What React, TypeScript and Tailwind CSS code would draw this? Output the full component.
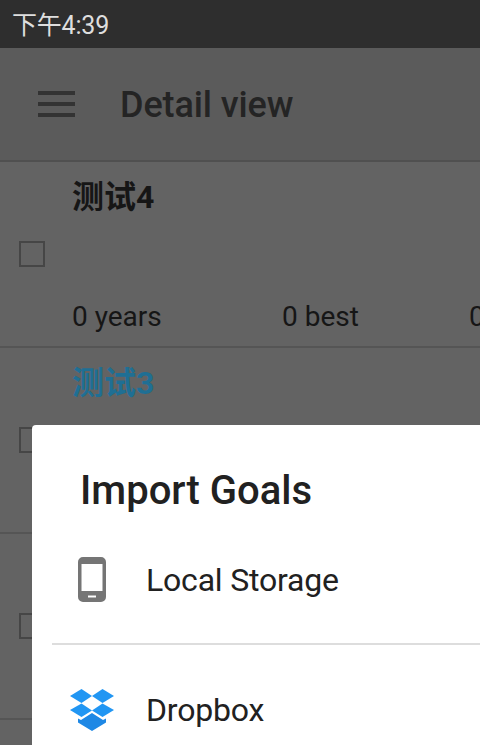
import React from "react";

const font = { fontFamily: 'Roboto, "Noto Sans CJK SC", sans-serif' };

// One goal row in the dimmed list behind the dialog
const GoalRow: React.FC<{ title: string; titleClass: string }> = ({ title, titleClass }) => (
  <div className="h-[186px] shrink-0 border-b-2 border-[#555555] flex">
    <div className="w-[72px] shrink-0 flex items-center pl-[19px]">
      <div className="w-[26px] h-[26px] border-2 border-[#464646]" />
    </div>
    <div className="flex-1 flex flex-col justify-between pt-[17px] pb-[11px] min-w-0">
      <div className={`text-[32px] leading-[36px] font-bold ${titleClass}`}>{title}</div>
      <div className="flex text-[28px] leading-[36px] text-[#161616] whitespace-nowrap">
        <span className="w-[210px] shrink-0">0 years</span>
        <span className="w-[187px] shrink-0">0 best</span>
        <span className="shrink-0">0</span>
      </div>
    </div>
  </div>
);

const PhoneIcon = () => (
  <svg width="28" height="45" viewBox="0 0 28 45">
    <path
      fillRule="evenodd"
      fill="#757575"
      d="M5 0h18a5 5 0 0 1 5 5v35a5 5 0 0 1-5 5H5a5 5 0 0 1-5-5V5a5 5 0 0 1 5-5zM3.500 7v27h21V7zM10 38.500v2h8v-2z"
    />
  </svg>
);

const DropboxIcon = () => (
  <svg width="44" height="42" viewBox="0 0 44 42">
    <path fill="#2196f3" d="M11.500 0 22 7 11.500 14 0 7z" />
    <path fill="#2196f3" d="M32.500 0 44 7 32.500 14 22 7z" />
    <path fill="#2196f3" d="M11.500 14.500 22 21.500 11.500 28 0 21z" />
    <path fill="#2196f3" d="M32.500 14.500 44 21 32.500 28 22 21.500z" />
    <path fill="#1e88e5" d="M22 24 33 31 36 29.500V33.500L22 42 8 33.500V29.500L11 31z" />
  </svg>
);

export default function App() {
  return (
    <div className="relative w-[480px] h-[745px] overflow-hidden bg-[#636363]" style={font}>
      <div className="h-[48px] bg-[#2e2e2e] flex items-center pl-[12px] pt-[3px] text-[25px] tracking-[-0.2px] text-[#dedede]">下午4:39</div>

      <div className="h-[114px] bg-[#5b5b5b] border-b-2 border-[#505050] flex items-center pl-[38px]">
        <div className="w-[37px] flex flex-col gap-[7px]">
          <div className="h-[4px] bg-[#333333]" />
          <div className="h-[4px] bg-[#333333]" />
          <div className="h-[4px] bg-[#333333]" />
        </div>
        <div className="ml-[45px] pt-[2px] text-[36px] tracking-[-0.1px] font-medium text-[#242424]">Detail view</div>
      </div>

      <GoalRow title="测试4" titleClass="text-[#161616]" />
      <GoalRow title="测试3" titleClass="text-[#1f6f94]" />
      <GoalRow title="测试2" titleClass="text-[#161616]" />

      {/* Import dialog, runs off the right and bottom of the window */}
      <div className="absolute left-[32px] top-[425px] w-[480px] h-[340px] bg-white rounded-tl-[4px] text-[#212121]">
        <div className="pl-[48px] pt-[43px] text-[40px] leading-[46px] font-medium">Import Goals</div>
        <div className="h-[129px] pt-[2px] flex items-center pl-[46px]">
          <PhoneIcon />
          <span className="ml-[40px] text-[32px] tracking-[-0.2px]">Local Storage</span>
        </div>
        <div className="ml-[20px] h-[2px] bg-[#dddddd]" />
        <div className="h-[130px] flex items-center pl-[38px]">
          <DropboxIcon />
          <span className="ml-[32px] text-[32px] tracking-[-0.2px]">Dropbox</span>
        </div>
      </div>
    </div>
  );
}
